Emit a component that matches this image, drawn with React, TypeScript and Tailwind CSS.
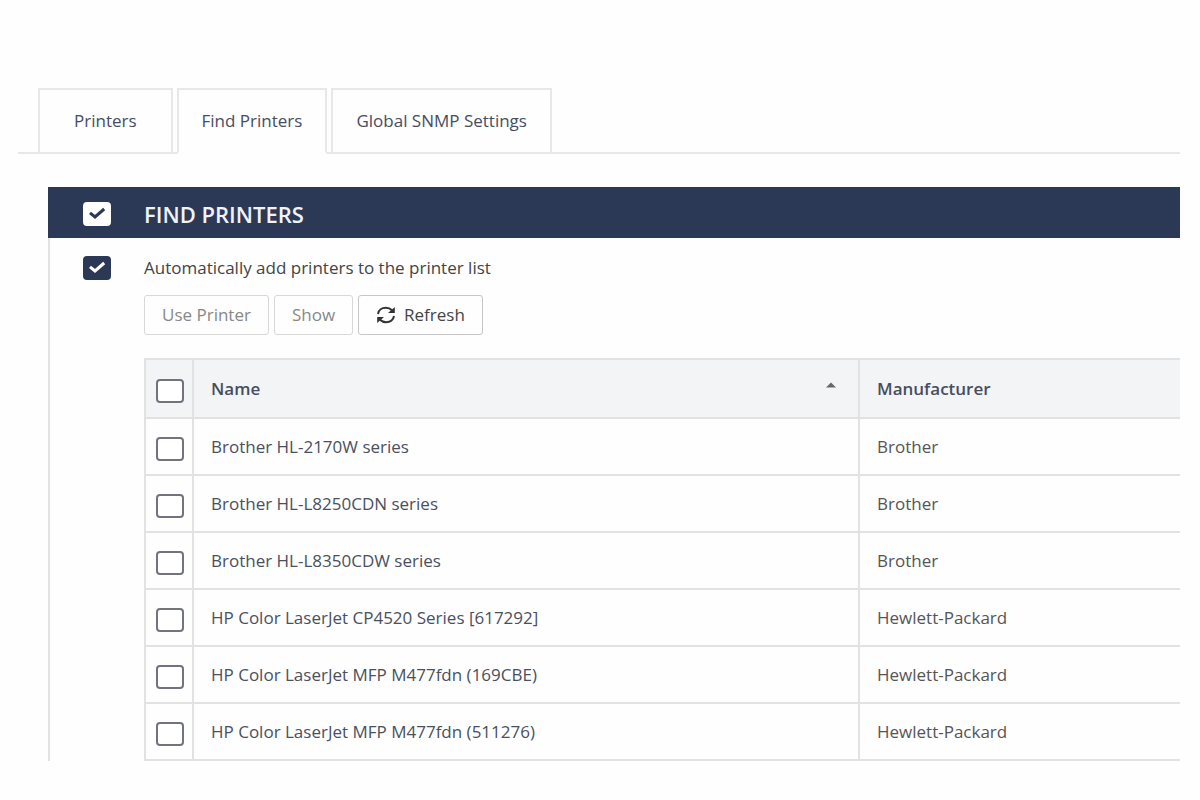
import { useState } from 'react'
import clsx from 'clsx'

interface Printer {
  name: string
  manufacturer: string
}

interface CheckBoxProps {
  id: string
  label?: string
  variant?: 'outline' | 'solid' | 'inverted'
  checked: boolean
  onChange: (checked: boolean) => void
}

const tabs = ['Printers', 'Find Printers', 'Global SNMP Settings']

const printers: Printer[] = [
  { name: 'Brother HL-2170W series', manufacturer: 'Brother' },
  { name: 'Brother HL-L8250CDN series', manufacturer: 'Brother' },
  { name: 'Brother HL-L8350CDW series', manufacturer: 'Brother' },
  { name: 'HP Color LaserJet CP4520 Series [617292]', manufacturer: 'Hewlett-Packard' },
  { name: 'HP Color LaserJet MFP M477fdn (169CBE)', manufacturer: 'Hewlett-Packard' },
  { name: 'HP Color LaserJet MFP M477fdn (511276)', manufacturer: 'Hewlett-Packard' },
]

function CheckBox({ id, label, variant = 'outline', checked, onChange }: CheckBoxProps) {
  return (
    <span className="relative block h-6 w-7 shrink-0">
      <input
        type="checkbox"
        id={id}
        aria-label={label}
        checked={checked}
        onChange={(event) => onChange(event.target.checked)}
        className={clsx(
          'block h-6 w-7 cursor-pointer appearance-none rounded border-2',
          variant === 'outline' && 'border-[#71747f] bg-white',
          variant === 'solid' && 'border-[#2b3856] bg-[#2b3856]',
          variant === 'inverted' && 'border-white bg-white'
        )}
      />
      {checked && (
        <svg
          viewBox="0 0 28 24"
          fill="none"
          stroke="currentColor"
          strokeWidth="3"
          className={clsx(
            'pointer-events-none absolute inset-0 h-6 w-7',
            variant === 'solid' ? 'text-white' : 'text-[#2b3856]'
          )}
        >
          <path d="M7 10.8l5 4.2 9.2-8" />
        </svg>
      )}
    </span>
  )
}

function RefreshIcon() {
  return (
    <svg viewBox="0 0 20 18" className="h-[18px] w-5" fill="none" stroke="#333" strokeWidth="2">
      <path d="M2 8C2.6 4 6 1.8 9.8 1.8c2.6 0 4.6.8 6.2 2.4" />
      <path d="M18 10c-.6 4-4 6.2-7.8 6.2-2.6 0-4.6-.8-6.2-2.4" />
      <path d="M18.8 1v6h-6.8z" fill="#333" stroke="none" />
      <path d="M1.2 17v-6H8z" fill="#333" stroke="none" />
    </svg>
  )
}

export default function App() {
  const [activeTab, setActiveTab] = useState('Find Printers')
  const [enabled, setEnabled] = useState(true)
  const [autoAdd, setAutoAdd] = useState(true)
  const [selected, setSelected] = useState<string[]>([])

  const toggle = (name: string, checked: boolean) => {
    setSelected(checked ? [...selected, name] : selected.filter((item) => item !== name))
  }

  return (
    <main className="min-h-screen bg-[#fefefe] pt-[88px] pr-5 pb-10 pl-[18px] font-['Open_Sans','Noto_Sans',sans-serif] text-[17px] text-[#4a5060]">
      <nav className="flex gap-1 border-b-2 border-[#e8e8e8] pl-5">
        {tabs.map((tab) => (
          <a
            key={tab}
            href="#"
            aria-current={tab === activeTab ? 'page' : undefined}
            onClick={() => setActiveTab(tab)}
            className={clsx(
              'border-2 border-[#e8e8e8] py-[19px] leading-6 font-medium whitespace-nowrap text-[#474d60]',
              tab === 'Printers' ? 'px-[34px]' : 'px-[23px]',
              tab === activeTab ? '-mb-0.5 border-b-[#fefefe]' : 'border-b-0'
            )}
          >
            {tab}
          </a>
        ))}
      </nav>

      <section className="mt-[33px] ml-[30px]">
        <header className="flex h-[51px] items-center gap-[33px] bg-[#2b3856] pt-0.5 pl-[35px]">
          <CheckBox id="enabled" variant="inverted" checked={enabled} onChange={setEnabled} />
          <h1 className="text-[22px] leading-7 font-semibold text-[#f0f2fa]">
            <label htmlFor="enabled">FIND PRINTERS</label>
          </h1>
        </header>

        <div className="border-l-2 border-[#e2e2e4] pt-4">
          <div className="flex items-center gap-[33px] pl-[33px]">
            <CheckBox id="auto-add" variant="solid" checked={autoAdd} onChange={setAutoAdd} />
            <label htmlFor="auto-add" className="leading-7 font-medium text-[#444]">
              Automatically add printers to the printer list
            </label>
          </div>

          <div className="pl-[94px]">
            <div className="mt-[13px] flex gap-[5px]">
              <button type="button" disabled className="h-10 rounded-[3px] border border-[#d8d8d8] px-[17px] text-[#888]">
                Use Printer
              </button>
              <button type="button" disabled className="h-10 rounded-[3px] border border-[#d8d8d8] px-[17px] text-[#888]">
                Show
              </button>
              <button type="button" className="flex h-10 items-center gap-2 rounded-[3px] border border-[#c6c6c6] px-[17px] font-medium text-[#444]">
                <RefreshIcon />
                Refresh
              </button>
            </div>

            <table className="mt-[23px] w-full table-fixed border-separate border-spacing-0 border-t-2 border-l-2 border-[#e2e2e2] text-left">
              <thead className="bg-[#f3f4f6] text-[#474d60]">
                <tr className="h-[59px]">
                  <th className="w-12 border-r-2 border-b-2 border-[#e2e2e2] pt-1 pl-2.5">
                    <CheckBox
                      id="select-all"
                      label="Select all printers"
                      checked={selected.length === printers.length}
                      onChange={(checked) => setSelected(checked ? printers.map((p) => p.name) : [])}
                    />
                  </th>
                  <th aria-sort="ascending" className="border-r-2 border-b-2 border-[#e2e2e2] pr-[22px] pl-[17px] font-semibold">
                    <span className="flex items-center justify-between">
                      Name
                      <svg viewBox="0 0 10 6" className="mb-2 h-1.5 w-2.5" fill="#666">
                        <path d="M0 5.5L5 .5l5 5z" />
                      </svg>
                    </span>
                  </th>
                  <th className="w-80 border-b-2 border-[#e2e2e2] pl-[17px] font-semibold">Manufacturer</th>
                </tr>
              </thead>
              <tbody>
                {printers.map((printer) => (
                  <tr key={printer.name} className="h-[57px]">
                    <td className="border-r-2 border-b-2 border-[#e2e2e2] pt-1 pl-2.5">
                      <CheckBox
                        id={printer.name}
                        label={`Select ${printer.name}`}
                        checked={selected.includes(printer.name)}
                        onChange={(checked) => toggle(printer.name, checked)}
                      />
                    </td>
                    <td className="border-r-2 border-b-2 border-[#e2e2e2] pl-[17px]">{printer.name}</td>
                    <td className="border-b-2 border-[#e2e2e2] pl-[17px] text-[#555]">{printer.manufacturer}</td>
                  </tr>
                ))}
              </tbody>
            </table>
          </div>
        </div>
      </section>
    </main>
  )
}
